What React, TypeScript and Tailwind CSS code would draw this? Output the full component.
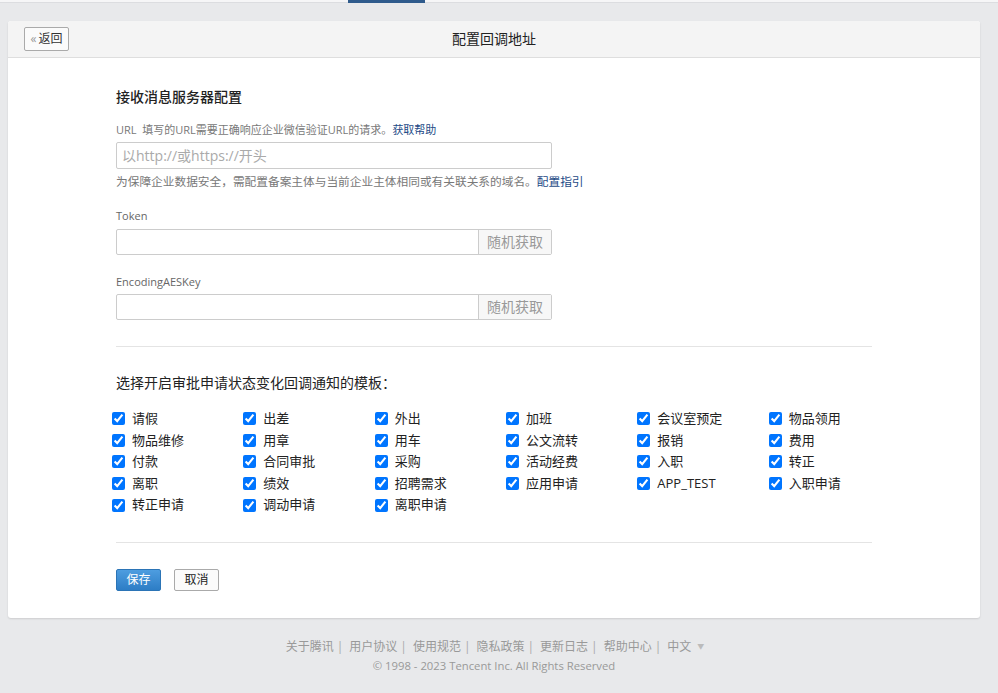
import React from "react";

const templates = [
  "请假", "出差", "外出", "加班", "会议室预定", "物品领用",
  "物品维修", "用章", "用车", "公文流转", "报销", "费用",
  "付款", "合同审批", "采购", "活动经费", "入职", "转正",
  "离职", "绩效", "招聘需求", "应用申请", "APP_TEST", "入职申请",
  "转正申请", "调动申请", "离职申请",
];

const footerLinks = ["关于腾讯", "用户协议", "使用规范", "隐私政策", "更新日志", "帮助中心"];

export default function App() {
  return (
    <div className="min-h-[693px] w-[998px] bg-[#e8e9eb] font-[Open_Sans,Noto_Sans_CJK_SC,sans-serif] text-[#333]">
      <div className="relative h-[3px] border-b border-[#dcdde0] bg-[#f6f6f7]">
        <div className="absolute left-[348px] top-0 h-[3px] w-[77px] bg-[#2f5b8c]" />
      </div>

      <div className="ml-[8px] mt-[18px] w-[972px] rounded-[3px] bg-white shadow-[0_1px_2px_rgba(0,0,0,0.12)]">
        <div className="relative flex h-[37px] items-center justify-center rounded-t-[3px] border-b border-[#dedede] bg-[#f4f4f4]">
          <button className="absolute left-[16px] top-[6px] flex h-[24px] w-[45px] items-center justify-center gap-[2px] rounded-[2px] border border-[#aaa] bg-[#fbfbfb] text-[12px] leading-none">
            <span className="text-[#999]">«</span>
            <span className="text-[#333]">返回</span>
          </button>
          <div className="text-[14px] leading-5 text-[#222]">配置回调地址</div>
        </div>

        <div className="px-[108px] pb-[27px] pt-[29px]">
          <div className="text-[14px] font-medium leading-5 text-[#222]">接收消息服务器配置</div>

          <div className="mt-[15px] text-[11px] leading-4 text-[#787878]">
            URL&nbsp;&nbsp;填写的URL需要正确响应企业微信验证URL的请求。
            <a className="text-[#1d4a86]">获取帮助</a>
          </div>
          <input
            className="mt-[4px] block h-[27px] w-[436px] rounded-[2px] border border-[#ccc] px-[5px] text-[14px] outline-none placeholder:text-[#aaa]"
            placeholder="以http://或https://开头"
          />
          <div className="mt-[4px] text-[11.7px] leading-4 text-[#787878]">
            为保障企业数据安全，需配置备案主体与当前企业主体相同或有关联关系的域名。
            <a className="text-[#1d4a86]">配置指引</a>
          </div>

          <div className="mt-[19px] text-[11px] leading-4 text-[#666]">Token</div>
          <KeyInput />

          <div className="mt-[19px] text-[11px] leading-4 text-[#666]">EncodingAESKey</div>
          <div className="-mt-px">
            <KeyInput />
          </div>

          <div className="mt-[26px] h-px w-[756px] bg-[#e4e4e4]" />

          <div className="mt-[26px] text-[14px] leading-5 text-[#222]">选择开启审批申请状态变化回调通知的模板：</div>

          <div className="-ml-[4px] mt-[15px] grid w-[788px] grid-cols-6">
            {templates.map((t) => (
              <label key={t} className="flex h-[21.6px] items-center gap-[7px] text-[13px] text-[#222]">
                <input type="checkbox" defaultChecked className="m-0 h-[13px] w-[13px] accent-[#0075ff]" />
                <span>{t}</span>
              </label>
            ))}
          </div>

          <div className="mt-[26px] h-px w-[756px] bg-[#e4e4e4]" />

          <div className="mt-[26px] flex gap-[13px]">
            <button className="h-[22px] w-[45px] rounded-[2px] border border-[#2b74b6] bg-gradient-to-b from-[#4d9de0] to-[#2d7dc5] text-[12px] leading-none text-white">
              保存
            </button>
            <button className="h-[22px] w-[45px] rounded-[2px] border border-[#aaa] bg-[#fbfbfb] text-[12px] leading-none text-[#222]">
              取消
            </button>
          </div>
        </div>
      </div>

      <div className="ml-[8px] w-[972px] pt-[21px] text-center text-[12px] leading-4 text-[#999]">
        <div className="flex justify-center pl-[2px]">
          {footerLinks.map((l) => (
            <span key={l} className="flex">
              <span>{l}</span>
              <span className="ml-[3px] mr-[6px] text-[#aaa]">|</span>
            </span>
          ))}
          <span>中文</span>
          <span className="ml-[6px] text-[7px] text-[#bbb]">▼</span>
        </div>
        <div className="mt-[3px] text-[11.3px]">© 1998 - 2023 Tencent Inc. All Rights Reserved</div>
      </div>
    </div>
  );
}

function KeyInput() {
  return (
    <div className="mt-[5px] flex h-[26px] w-[436px] rounded-[2px] border border-[#ccc]">
      <input className="min-w-0 flex-1 px-[5px] text-[14px] outline-none" />
      <button className="w-[73px] border-l border-[#ccc] bg-[#f7f7f7] text-[14px] leading-none text-[#999]">
        随机获取
      </button>
    </div>
  );
}
